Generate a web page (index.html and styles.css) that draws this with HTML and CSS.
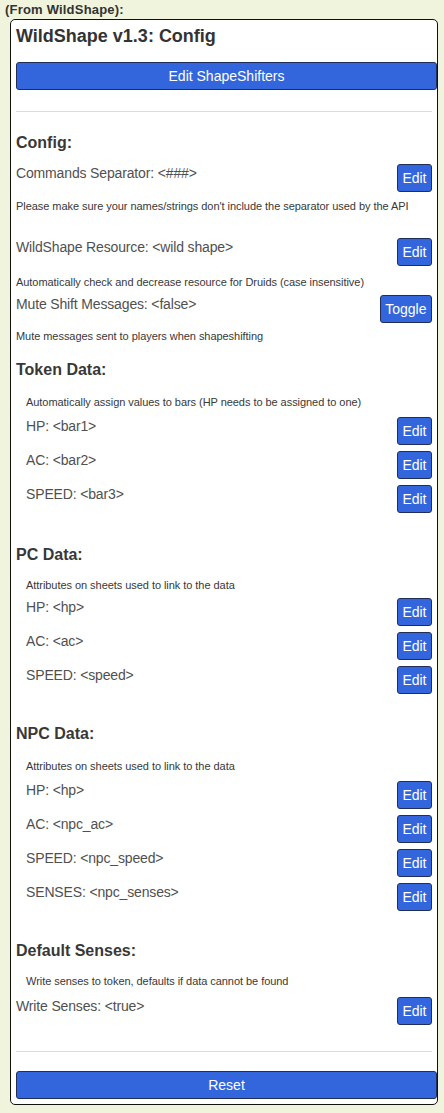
FILE: index.html
```html
<!DOCTYPE html>
<html>
<head>
<meta charset="utf-8">
<link rel="stylesheet" href="styles.css">
</head>
<body>
<div class="by">(From WildShape):</div>
<div class="panel">
  <div class="title">WildShape v1.3: Config</div>
  <button class="btn wide top-btn">Edit ShapeShifters</button>
  <hr class="sep sep-top">

  <div class="heading h-config">Config:</div>
  <div class="row r-first"><span class="label">Commands Separator: &lt;###&gt;</span><button class="btn">Edit</button></div>
  <div class="desc d1">Please make sure your names/strings don't include the separator used by the API</div>
  <div class="row r-res"><span class="label">WildShape Resource: &lt;wild shape&gt;</span><button class="btn">Edit</button></div>
  <div class="desc d2">Automatically check and decrease resource for Druids (case insensitive)</div>
  <div class="row r-mute"><span class="label">Mute Shift Messages: &lt;false&gt;</span><button class="btn">Toggle</button></div>
  <div class="desc d3">Mute messages sent to players when shapeshifting</div>

  <div class="heading h-token">Token Data:</div>
  <div class="group">
    <div class="desc gd-token">Automatically assign values to bars (HP needs to be assigned to one)</div>
    <div class="row r-first-item"><span class="label">HP: &lt;bar1&gt;</span><button class="btn">Edit</button></div>
    <div class="row r-item"><span class="label">AC: &lt;bar2&gt;</span><button class="btn">Edit</button></div>
    <div class="row r-item"><span class="label">SPEED: &lt;bar3&gt;</span><button class="btn">Edit</button></div>
  </div>

  <div class="heading h-pc">PC Data:</div>
  <div class="group">
    <div class="desc gd-pc">Attributes on sheets used to link to the data</div>
    <div class="row r-first-item-pc"><span class="label">HP: &lt;hp&gt;</span><button class="btn">Edit</button></div>
    <div class="row r-item"><span class="label">AC: &lt;ac&gt;</span><button class="btn">Edit</button></div>
    <div class="row r-item"><span class="label">SPEED: &lt;speed&gt;</span><button class="btn">Edit</button></div>
  </div>

  <div class="heading h-npc">NPC Data:</div>
  <div class="group">
    <div class="desc gd-npc">Attributes on sheets used to link to the data</div>
    <div class="row r-first-item"><span class="label">HP: &lt;hp&gt;</span><button class="btn">Edit</button></div>
    <div class="row r-item"><span class="label">AC: &lt;npc_ac&gt;</span><button class="btn">Edit</button></div>
    <div class="row r-item"><span class="label">SPEED: &lt;npc_speed&gt;</span><button class="btn">Edit</button></div>
    <div class="row r-item"><span class="label">SENSES: &lt;npc_senses&gt;</span><button class="btn">Edit</button></div>
  </div>

  <div class="heading h-senses">Default Senses:</div>
  <div class="desc gd-senses indent">Write senses to token, defaults if data cannot be found</div>
  <div class="row r-write"><span class="label">Write Senses: &lt;true&gt;</span><button class="btn">Edit</button></div>

  <hr class="sep sep-bottom">
  <button class="btn wide reset-btn">Reset</button>
</div>
</body>
</html>
```

FILE: styles.css
```css
html, body {
  margin: 0;
  padding: 0;
}
body {
  background: #f1f4dc;
  font-family: "Liberation Sans", Arial, sans-serif;
  width: 444px;
  height: 1113px;
  padding: 2px 0 0 5px;
  box-sizing: border-box;
  overflow: hidden;
}
.by {
  font-weight: bold;
  font-size: 13px;
  line-height: 15px;
  color: #333;
  letter-spacing: 0.2px;
}
.panel {
  margin-top: 2px;
  margin-left: 5px;
  width: 428px;
  box-sizing: border-box;
  background: #fff;
  border: 1px solid #111;
  border-radius: 5px;
  padding: 6px 0 5px 5px;
  display: flex;
  flex-direction: column;
  align-items: stretch;
}
.title {
  font-size: 18px;
  font-weight: bold;
  line-height: 21px;
  color: #333;
}
.btn {
  font-family: "Liberation Sans", Arial, sans-serif;
  font-size: 14px;
  line-height: 26px;
  height: 28px;
  color: #fff;
  background: #3366dd;
  border: 1px solid #1f2f5a;
  border-radius: 3px;
  padding: 0 4.5px;
  margin: 0;
  box-sizing: border-box;
  flex: none;
}
.wide {
  display: block;
  width: 100%;
  text-align: center;
}
.top-btn { margin-top: 15px; }
.reset-btn { margin-top: 19px; }
.sep {
  border: 0;
  border-top: 1px solid #dcdcdc;
  height: 0;
  margin: 0 5px 0 0;
}
.sep-top { margin-top: 21px; }
.sep-bottom { margin-top: 26px; }
.heading {
  font-size: 16px;
  font-weight: bold;
  line-height: 18px;
  color: #383838;
}
.h-config { margin-top: 22px; }
.h-token { margin-top: 18px; }
.h-pc { margin-top: 33px; }
.h-npc { margin-top: 31px; }
.h-senses { margin-top: 31px; }
.row {
  display: flex;
  justify-content: space-between;
  align-items: flex-start;
  margin-right: 5px;
}
.label {
  font-size: 14px;
  line-height: 16px;
  color: #505050;
  padding-top: 1px;
  letter-spacing: -0.15px;
}
.desc {
  font-size: 11px;
  line-height: 13px;
  color: #383838;
  letter-spacing: -0.05px;
}
.r-first { margin-top: 12px; }
.d1 { margin-top: 8px; }
.r-res { margin-top: 25px; }
.d2 { margin-top: 10px; }
.r-mute { margin-top: 6px; }
.d3 { margin-top: 7px; }
.group {
  padding-left: 10px;
  display: flex;
  flex-direction: column;
}
.indent { padding-left: 10px; }
.gd-token { margin-top: 17px; }
.gd-pc { margin-top: 15px; }
.gd-npc { margin-top: 17px; }
.gd-senses { margin-top: 15px; }
.r-first-item { margin-top: 8px; }
.r-first-item-pc { margin-top: 6px; }
.r-item { margin-top: 6px; }
.r-write { margin-top: 9px; }
```
